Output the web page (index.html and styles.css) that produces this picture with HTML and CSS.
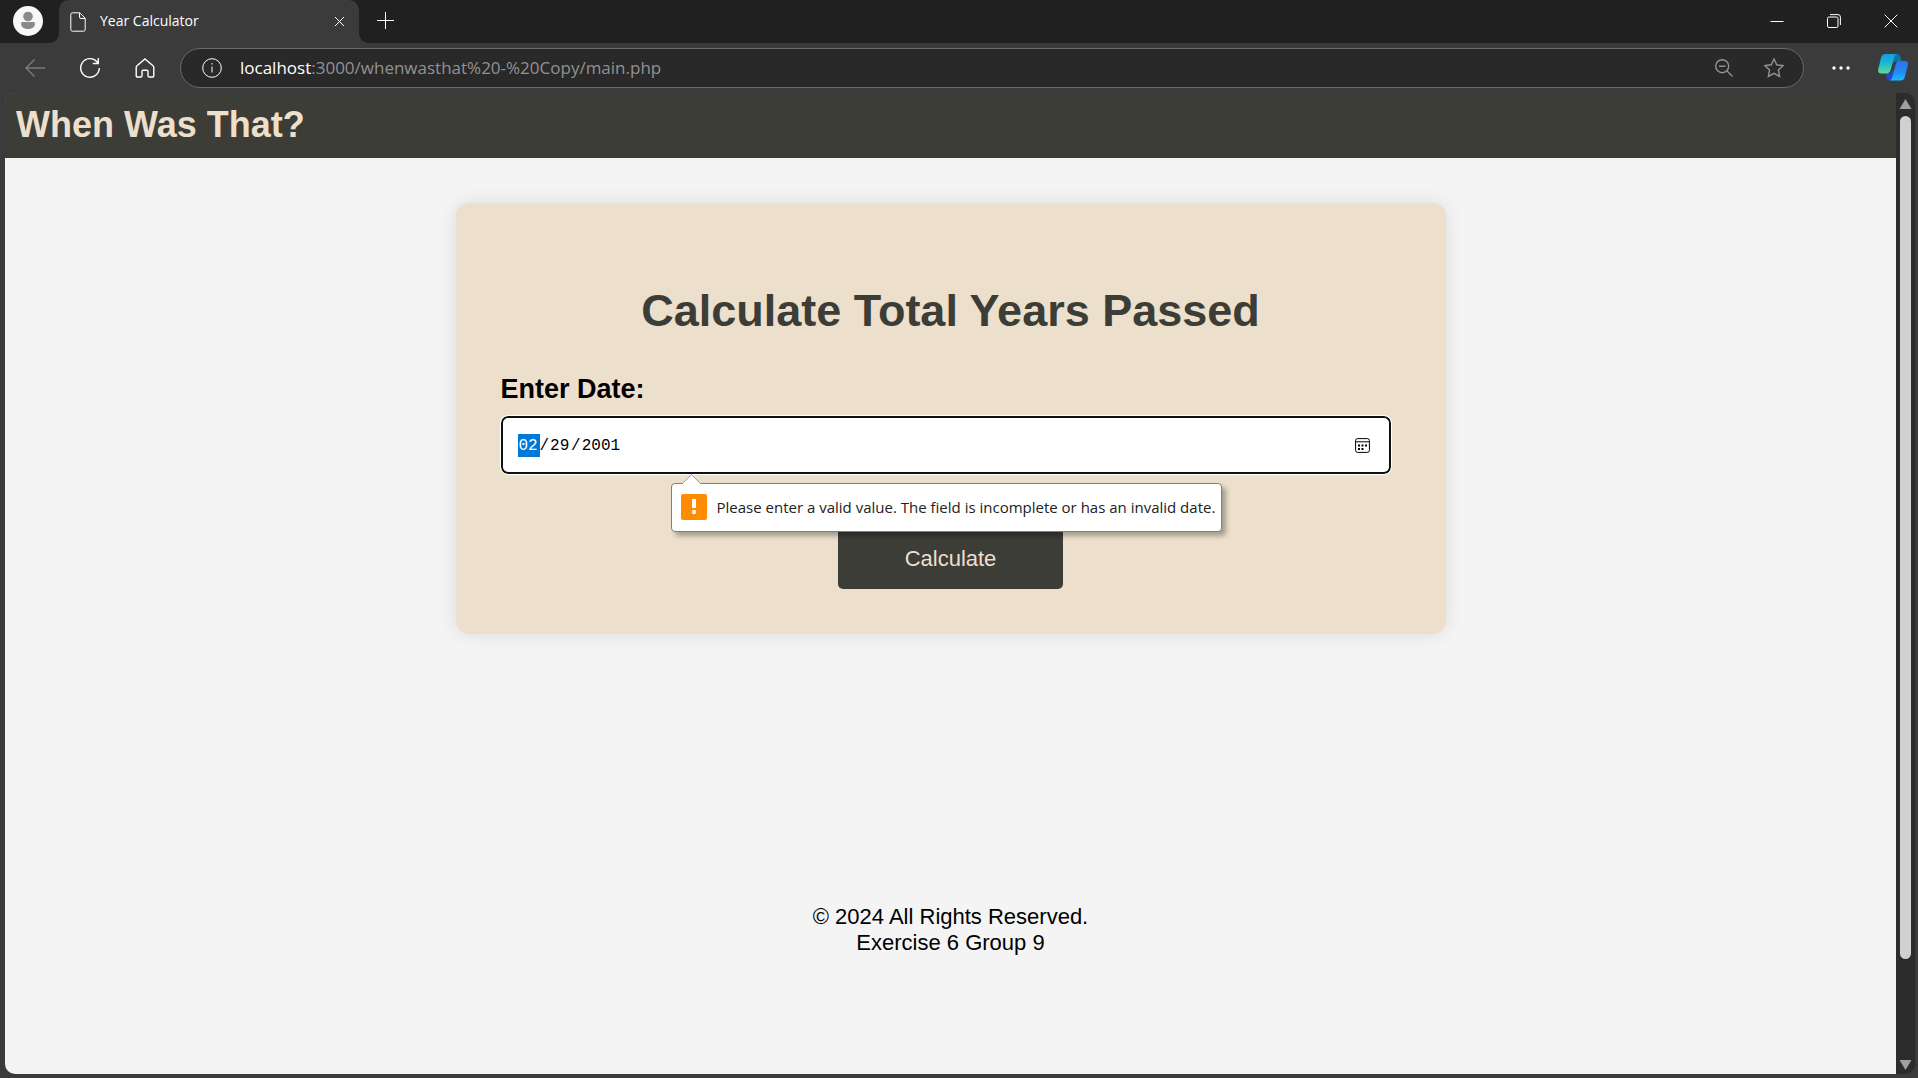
FILE: index.html
```html
<!DOCTYPE html>
<html lang="en">
<head>
<meta charset="utf-8">
<title>Year Calculator</title>
<link rel="stylesheet" href="styles.css">
</head>
<body>
<div class="tab-bar">
  <button class="profile" aria-label="Profile">
    <svg width="30" height="30" viewBox="0 0 30 30"><circle cx="15" cy="15" r="15" fill="#f8f8f8"/><circle cx="15" cy="10.500" r="4.800" fill="#8a8a8a"/><path d="M9.500 16h11a1.500 1.500 0 0 1 1.500 1.500c0 3.800-3.300 5.500-7 5.500s-7-1.700-7-5.500A1.500 1.500 0 0 1 9.500 16z" fill="#8a8a8a"/></svg>
  </button>
  <div class="tab">
    <svg class="tab-page" width="16" height="20" viewBox="0 0 16 20"><path d="M2.500.8h7.200L15.200 6.300v11.200a1.700 1.700 0 0 1-1.700 1.700h-11a1.700 1.700 0 0 1-1.700-1.700v-15A1.700 1.700 0 0 1 2.500.8zM9.500 1v4a1.500 1.500 0 0 0 1.500 1.500h4"/></svg>
    <span class="tab-title">Year Calculator</span>
    <button class="tab-close" aria-label="Close tab"><svg width="11" height="11" viewBox="0 0 11 11"><path d="M1 1l9 9M10 1l-9 9"/></svg></button>
  </div>
  <button class="new-tab" aria-label="New tab"><svg width="17" height="17" viewBox="0 0 17 17"><path d="M8.500 0v17M0 8.500h17"/></svg></button>
  <div class="window-buttons">
    <button aria-label="Minimize"><svg width="14" height="14" viewBox="0 0 14 14"><path d="M.5 7.500h13"/></svg></button>
    <button aria-label="Restore"><svg width="14" height="14" viewBox="0 0 14 14"><rect x=".5" y="3" width="10.500" height="10.500" rx="1.500"/><path d="M3 .6h8a2.400 2.400 0 0 1 2.400 2.400v8"/></svg></button>
    <button aria-label="Close"><svg width="14" height="14" viewBox="0 0 14 14"><path d="M.7.7l12.600 12.600M13.300.7L.7 13.300"/></svg></button>
  </div>
</div>
<div class="toolbar">
  <div class="nav">
    <button class="disabled" aria-label="Back"><svg width="20" height="20" viewBox="0 0 20 20"><path d="M9.500 1.500L1 10l8.500 8.500M1 10h19"/></svg></button>
    <button aria-label="Refresh"><svg width="22" height="22" viewBox="0 0 22 22"><path d="M20.300 11a9.300 9.300 0 1 1-2.300-6.200l1 1.400M19.300 1v5.500h-5.500"/></svg></button>
    <button aria-label="Home"><svg width="20" height="20" viewBox="0 0 20 20"><path d="M10 1l8 6.800c.5.400.8 1 .8 1.600v8.400a1.200 1.200 0 0 1-1.200 1.200h-3.400a1.200 1.200 0 0 1-1.200-1.200v-4.600a1 1 0 0 0-1-1H8a1 1 0 0 0-1 1v4.600A1.200 1.200 0 0 1 5.800 19H2.400a1.200 1.200 0 0 1-1.200-1.200V9.400c0-.6.300-1.200.8-1.600z"/></svg></button>
  </div>
  <div class="address">
    <svg class="info" width="20" height="20" viewBox="0 0 20 20"><circle cx="10" cy="10" r="9.300"/><path d="M10 8.500v6M10 5v1.600"/></svg>
    <span class="url"><span class="host">localhost</span>:3000/whenwasthat%20-%20Copy/main.php</span>
    <button aria-label="Zoom"><svg width="18" height="18" viewBox="0 0 18 18"><circle cx="7.200" cy="7.200" r="6.500"/><path d="M4 7.200h6.400M12 12l5.500 5.500"/></svg></button>
    <button aria-label="Favorite"><svg width="20" height="20" viewBox="0 0 20 20"><path d="M10 1l2.700 5.800 6.400.8-4.700 4.400 1.200 6.400L10 15.300 4.400 18.400l1.200-6.400L.9 7.600l6.400-.8z"/></svg></button>
  </div>
  <button class="more" aria-label="Settings and more"><svg width="18" height="4" viewBox="0 0 18 4"><circle cx="2" cy="2" r="1.700"/><circle cx="9" cy="2" r="1.700"/><circle cx="16" cy="2" r="1.700"/></svg></button>
  <button class="copilot" aria-label="Copilot"><svg width="30" height="27" viewBox="0 0 30 27">
    <defs>
      <linearGradient id="left" x1="0" y1="0" x2="0" y2="1"><stop offset="0" stop-color="#0f9fe6"/><stop offset=".5" stop-color="#1fb9cf"/><stop offset="1" stop-color="#5fdc90"/></linearGradient>
      <linearGradient id="right" x1="0" y1="0" x2="0" y2="1"><stop offset="0" stop-color="#2f74e2"/><stop offset=".6" stop-color="#1f8df5"/><stop offset="1" stop-color="#16c0f8"/></linearGradient>
    </defs>
    <path d="M14 0h5c2 0 3 1.200 3.600 3.300L23.500 7H19c-2.200 0-3.200 1-4 3z" fill="#0c76a8"/>
    <path d="M7 19h6L15 16l2 8.500-2 2h-2.500c-2.400 0-3.200-1.200-3.800-3.500z" fill="#2348d8"/>
    <path d="M7.500 0H19c-1.600.4-2.300 1.600-2.900 3.500l-3.500 12.800C11.800 18.300 10.800 19.500 8.500 19.500H3.200C.8 19.500-.3 18 .2 15.500L3 4C3.700 1.500 5 0 7.500 0z" fill="url(#left)"/>
    <path d="M20.500 7H27c2.400 0 3.400 1.500 2.900 4L27 22.500c-.7 2.500-2 4-4.500 4H11.500c1.600-.4 2.200-1.500 2.800-3.500l3.500-13c.4-1.800 1.100-3 2.700-3z" fill="url(#right)"/>
  </svg></button>
</div>
<div class="viewport">
  <div class="page">
    <header class="site-header"><h2>When Was That?</h2></header>
    <main>
      <form class="card">
        <h1>Calculate Total Years Passed</h1>
        <label class="date-label" for="month">Enter Date:</label>
        <div class="date-field">
          <input id="month" class="part active" value="02"><span>/</span><input class="part" value="29" aria-label="Day"><span>/</span><input class="part year" value="2001" aria-label="Year">
          <button type="button" class="picker" aria-label="Show date picker"><svg width="15" height="15" viewBox="0 0 15 15"><rect x=".6" y=".6" width="13.800" height="13.800" rx="2"/><path d="M.6 3.800h13.800"/><path class="dots" d="M3 6.500h2v2H3zM6.500 6.500h2v2h-2zM10 6.500h2v2h-2zM3 10h2v2H3zM6.500 10h2v2h-2z"/></svg></button>
          <div class="bubble" role="alert">
            <svg class="bubble-arrow" width="20" height="10" viewBox="0 0 20 10"><path d="M0 10L9.500.7 19 10" fill="#fff" stroke="#9a9a9a"/></svg>
            <svg width="26" height="26" viewBox="0 0 26 26"><rect width="26" height="26" rx="2" fill="#ff8c00"/><path d="M11 5h4v9h-4z" fill="#fff"/><circle cx="13" cy="18" r="2.200" fill="#fff"/></svg>
            <span>Please enter a valid value. The field is incomplete or has an invalid date.</span>
          </div>
        </div>
        <button class="calculate">Calculate</button>
      </form>
    </main>
    <footer>© 2024 All Rights Reserved.<br>Exercise 6 Group 9</footer>
  </div>
  <div class="scrollbar">
    <svg width="13" height="10" viewBox="0 0 13 10"><path d="M6.500 0L12.500 10H.5z"/></svg>
    <div class="track"><div class="thumb"></div></div>
    <svg width="13" height="10" viewBox="0 0 13 10"><path d="M6.500 10L12.500 0H.5z"/></svg>
  </div>
</div>
</body>
</html>
```
FILE: styles.css
```css
* { box-sizing: border-box; }
body {
  margin: 0;
  min-height: 100vh;
  display: flex;
  flex-direction: column;
  background: #3b3b3b;
  font-family: "Liberation Sans", Arial, sans-serif;
}
button {
  border: 0;
  padding: 0;
  background: none;
  font: inherit;
  color: inherit;
  display: flex;
  align-items: center;
  justify-content: center;
}
svg { display: block; flex: none; }

.tab-bar {
  height: 43px;
  display: flex;
  align-items: center;
  background: #202020;
  color: #fff;
  font-family: "Open Sans", "Noto Sans", sans-serif;
}
.tab-bar svg, .toolbar svg { fill: none; stroke: #fff; }
.tab-bar .profile svg, .toolbar .copilot svg { stroke: none; }
.profile { width: 59px; padding-right: 3px; padding-bottom: 1px; }
.tab {
  position: relative;
  width: 300px;
  height: 43px;
  padding: 0 14px 0 11px;
  display: flex;
  align-items: center;
  background: #3b3b3b;
  border-radius: 10px 10px 0 0;
}
.tab::before, .tab::after {
  content: "";
  position: absolute;
  bottom: 0;
  width: 10px;
  height: 10px;
}
.tab::before { left: -10px; background: radial-gradient(circle at 0 0, #202020 10px, #3b3b3b 10px); }
.tab::after { right: -10px; background: radial-gradient(circle at 100% 0, #202020 10px, #3b3b3b 10px); }
.tab-title { flex: 1; margin-left: 14px; padding-bottom: 2px; font-size: 14px; }
.new-tab { width: 53px; padding-bottom: 2px; }
.window-buttons { display: flex; margin-left: auto; }
.window-buttons button { width: 57px; height: 43px; padding: 0 0 2px 2px; }

.toolbar {
  height: 50px;
  padding-bottom: 1px;
  display: flex;
  align-items: center;
  color: #fff;
  font-family: "Open Sans", "Noto Sans", sans-serif;
}
.nav { display: flex; padding-left: 7px; margin-right: 8px; }
.nav button { width: 55px; height: 40px; }
.nav .disabled svg { stroke: #7b7b7b; }
.nav svg { stroke-width: 1.400; }
.address {
  flex: 1;
  height: 40px;
  padding: 0 19px 0 21px;
  display: flex;
  align-items: center;
  background: #292929;
  border: 1px solid #6a6a6a;
  border-radius: 20px;
}
.url { flex: 1; margin-left: 18px; padding-bottom: 1px; font-size: 17px; color: #929292; }
.host { color: #fff; }
.address button { margin-left: 31px; }
.address button svg { stroke: #929292; stroke-width: 1.400; }
.more { width: 74px; }
.toolbar .more svg { fill: #fff; stroke: none; }
.copilot { margin-right: 10px; }

.viewport { flex: 1; display: flex; padding: 0 3px 4px 5px; }
.page {
  flex: 1;
  display: flex;
  flex-direction: column;
  background: #f4f4f4;
  border-radius: 12px 0 0 10px;
}
.site-header { padding: 11px 11px 13px; background: #3c3d37; border-radius: 10px 0 0; }
.site-header h2 { margin: 0; font-size: 36px; line-height: 41px; color: #ecdfcc; }
main { flex: 1; padding: 45px; }
.card {
  max-width: 990px;
  margin: 0 auto;
  padding: 37px 45px 45px;
  display: flex;
  flex-direction: column;
  background: #ecdfcc;
  border-radius: 13px;
  box-shadow: 0 0 18px rgba(0, 0, 0, 0.1);
}
h1 { margin: 45px 0 37px; font-size: 45px; line-height: 52px; text-align: center; color: #3c3d37; }
.date-label { font-size: 27px; font-weight: bold; line-height: 31px; color: #000; }
.date-field {
  position: relative;
  height: 58px;
  margin: 11px 10px 0 0;
  padding: 0 19px 0 15px;
  display: flex;
  align-items: center;
  background: #fff;
  border: 2px solid #101010;
  border-radius: 7px;
  outline: 1px solid #fff;
  font: 16px "Liberation Mono", monospace;
  color: #000;
}
.date-field > span { padding-top: 2px; }
.part { width: 22px; height: 23px; padding: 2px 1px 0; border: 0; outline: 0; background: none; font: inherit; color: inherit; }
.part.active { background: #0078d7; color: #fff; }
.part.year { width: 42px; }
.picker { margin-left: auto; }
.picker svg { fill: none; stroke: #000; }
.picker .dots { fill: #000; stroke: none; }
.bubble {
  position: absolute;
  top: 65px;
  left: 168px;
  height: 49px;
  padding: 0 6px 2px 9px;
  display: flex;
  align-items: center;
  gap: 10px;
  white-space: nowrap;
  background: #fff;
  border: 1px solid #808080;
  border-radius: 4px;
  box-shadow: 4px 4px 5px rgba(0, 0, 0, 0.3);
  font: 15px "Open Sans", "Noto Sans", sans-serif;
  color: #222;
}
.bubble-arrow { position: absolute; top: -10px; left: 10px; }
.calculate {
  width: 225px;
  height: 62px;
  margin: 53px auto 0;
  padding-top: 2px;
  background: #3c3d37;
  border-radius: 5px;
  font-size: 22px;
  color: #ecdfcc;
}
footer { padding-bottom: 118px; font-size: 22px; line-height: 26px; text-align: center; color: #000; }

.scrollbar {
  width: 19px;
  padding: 6px 0 4px;
  display: flex;
  flex-direction: column;
  align-items: center;
  background: #2c2c2c;
  border-radius: 0 10px 10px 0;
}
.scrollbar svg { fill: #a0a0a0; }
.track { flex: 1; padding: 7px 0; }
.thumb { width: 11px; height: 90%; background: #d0d0d0; border-radius: 6px; }
```
